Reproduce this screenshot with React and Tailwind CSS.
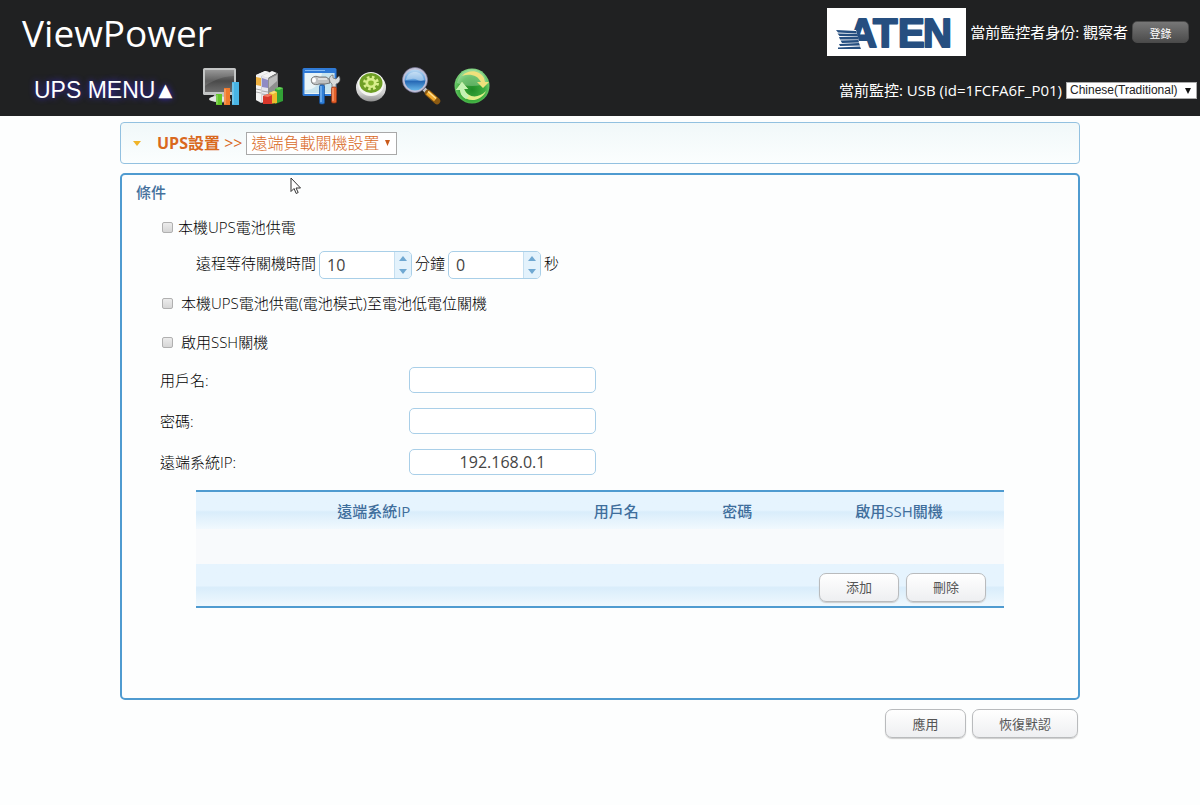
import React, { useState } from "react";

const MonitorIcon = () => (
  <svg viewBox="0 0 40 40" className="size-10" aria-hidden="true">
    <defs>
      <linearGradient id="screen" x1="0" y1="0" x2="0" y2="1">
        <stop offset="0" stopColor="#8a8a8a" />
        <stop offset="0.5" stopColor="#4a4a4a" />
        <stop offset="1" stopColor="#6d6d6d" />
      </linearGradient>
    </defs>
    <path d="M14 28h14l2 7c-6 2-14 2-20-1z" fill="#b9bbbc" />
    <ellipse cx="17" cy="33" rx="9" ry="3" fill="#e4e6e6" />
    <rect x="2" y="2" width="33" height="27" rx="1.5" fill="#c3c5c5" />
    <rect x="4" y="4" width="29" height="22" fill="url(#screen)" />
    <path d="M4 4h29v6C24 10 12 14 4 20z" fill="#fff" opacity="0.12" />
    <rect x="15" y="28" width="6" height="11" fill="#62c52a" />
    <rect x="23" y="22" width="6" height="17" fill="#f07a2c" />
    <rect x="31" y="16" width="7" height="23" fill="#48b4e4" />
    <path d="M16 29v9M24 23v15M32 17v21" stroke="#fff" strokeOpacity="0.4" />
  </svg>
);

const BooksIcon = () => (
  <svg viewBox="0 0 40 40" className="size-10" aria-hidden="true">
    <path d="M5 9l9-4 4 1v29l-8 2-5-3z" fill="#d2d2d2" />
    <path d="M5 9l9-4 4 1-8 4zM11 10l10-5 5 2-9 5z" fill="#f4f4f4" />
    <path d="M17 12l10-5v25l-10 5z" fill="#8f8f8f" />
    <path d="M18 13l8-4v6l-8 7z" fill="#bdbdbd" />
    <path d="M5 9l5 1v26l-5-2z" fill="#f3f3f3" />
    <path d="M11 10l6 2v25l-6-1z" fill="#e6e6ee" />
    <path d="M5 11l5 1v8l-5-1z" fill="#eeb040" />
    <path d="M11 12l6 2v8l-6-1z" fill="#8f8bc4" />
    <path d="M5 23l5 1M5 26l5 1M11 25l6 1M11 28l6 1" stroke="#aaa" />
    <path d="M24 23l4-2 4 1v13l-8 3z" fill="#32a236" />
    <path d="M24 23l4-2 4 1-4 2z" fill="#6bd35a" />
    <path d="M18 27l5-2 3 1v11l-8 1z" fill="#edb92c" />
    <path d="M18 27l5-2 3 1-4 2z" fill="#fbe079" />
    <path d="M12 30l5-2 4 1v9l-9 0z" fill="#d8372b" />
    <path d="M12 30l5-2 4 1-4 2z" fill="#f37a62" />
  </svg>
);

const ToolsIcon = () => (
  <svg viewBox="0 0 40 40" className="size-10" aria-hidden="true">
    <rect x="1.5" y="2" width="34" height="28" rx="1.5" fill="#2f7ad6" />
    <rect x="3.5" y="7" width="30" height="21" fill="#e9f4f6" />
    <path d="M4 24c10 0 15-6 17-17h12v20H4z" fill="#c8e4ee" />
    <path d="M4 4.500h20" stroke="#83baf3" />
    <rect x="19" y="14" width="5" height="8" fill="#a8a8a8" />
    <path
      d="M11 12c2-2 5-2 7-1h7l3 2 1 4-5 1h-6c-2 1-5 1-7-1-1-2-1-4 0-5z"
      fill="#bfc1c1"
      stroke="#555"
      strokeWidth="0.700"
    />
    <ellipse cx="13" cy="14" rx="2" ry="2.500" fill="#fff" />
    <path d="M17 13h9" stroke="#fff" />
    <rect x="18.500" y="19" width="5" height="19" rx="1.500" fill="#2f7fd8" stroke="#154f96" strokeWidth="0.700" />
    <path d="M20 20v16" stroke="#9fd0fa" />
    <path d="M31 22h4v-4c4-1 5-5 3-8l-3 3-3-1v-3c-4 0-5 6-1 9z" fill="#d8dada" stroke="#666" strokeWidth="0.700" />
    <rect x="30.500" y="21" width="5" height="16" rx="1.500" fill="#e4612a" stroke="#9a3211" strokeWidth="0.700" />
    <path d="M32 22v13" stroke="#ffb48c" />
  </svg>
);

const GearIcon = () => (
  <svg viewBox="0 0 40 40" className="size-10" aria-hidden="true">
    <defs>
      <linearGradient id="dial" x1="0" y1="0" x2="0" y2="1">
        <stop offset="0" stopColor="#f4f4f4" />
        <stop offset="0.700" stopColor="#d0d0d0" />
        <stop offset="1" stopColor="#8f8f8f" />
      </linearGradient>
    </defs>
    <ellipse cx="20" cy="21.500" rx="15" ry="14" fill="url(#dial)" />
    <ellipse cx="20" cy="18" rx="13" ry="12" fill="#f6f6f2" />
    <ellipse cx="20" cy="17" rx="11.500" ry="10" fill="#6f9f26" />
    <ellipse cx="20" cy="17" rx="5.500" ry="5" fill="#d8ee8c" />
    <ellipse cx="20" cy="17" rx="6.500" ry="5.800" fill="none" stroke="#d8ee8c" strokeWidth="3" strokeDasharray="2.500 2.350" />
    <ellipse cx="20" cy="17" rx="2.800" ry="2.400" fill="#86b52f" />
  </svg>
);

const SearchIcon = () => (
  <svg viewBox="0 0 40 40" className="size-10" aria-hidden="true">
    <defs>
      <linearGradient id="lens" x1="0" y1="0" x2="0" y2="1">
        <stop offset="0" stopColor="#c4dff5" />
        <stop offset="0.500" stopColor="#5d9edc" />
        <stop offset="0.550" stopColor="#2567b4" />
        <stop offset="1" stopColor="#6fc0ee" />
      </linearGradient>
    </defs>
    <path d="M23 23l5 5" stroke="#c4c4c8" strokeWidth="4" />
    <path d="M27 27l9 8" stroke="#8c5a12" strokeWidth="6.500" strokeLinecap="round" />
    <path d="M26.500 26.500l8 7" stroke="#f2a92b" strokeWidth="4.500" />
    <path d="M27 25.500l8 7" stroke="#fde29a" strokeWidth="1.200" />
    <circle cx="14" cy="14" r="11.500" fill="url(#lens)" stroke="#c0c0d6" strokeWidth="2" />
    <circle cx="14" cy="14" r="12.600" fill="none" stroke="#77779a" strokeWidth="0.600" />
    <path d="M5 14c1-6 5-8 9-8s8 2 9 8c-6 3-7-2-12-1-3 0-4 1-6 1z" fill="#fff" opacity="0.350" />
  </svg>
);

const RefreshIcon = () => (
  <svg viewBox="0 0 40 40" className="size-10" aria-hidden="true">
    <defs>
      <radialGradient id="globe" cx="0.500" cy="0.600" r="0.600">
        <stop offset="0" stopColor="#1f8a26" />
        <stop offset="0.600" stopColor="#3fae40" />
        <stop offset="1" stopColor="#86d884" />
      </radialGradient>
    </defs>
    <circle cx="21" cy="20" r="17.500" fill="url(#globe)" />
    <path d="M6 17C8 7 15 3.500 21 3.500S34 7 36 17c-8 4-22 4-30 0z" fill="#fff" opacity="0.250" />
    <path d="M11 10c6-7 18-6 22 2l1 4h4l-6 6-6-6h4c-3-7-12-9-19-6z" fill="#efe07c" />
    <path d="M35 25c-5 11-19 12-25 3l-1-4H5l6-8 6 7h-4c4 9 14 10 22 2z" fill="#e2ee8a" />
    <path d="M10 28l-1-4H5l6-8 6 7h-4c1 3 3 5 5 7l-3 3c-2-1-4-3-5-5z" fill="#c4f2b4" />
  </svg>
);

const AtenLogo = () => (
  <svg viewBox="0 0 139 48" className="h-12 w-[139px] bg-white" role="img" aria-label="ATEN">
    <text
      x="21 46 71 96"
      y="39"
      fontFamily="Liberation Sans, sans-serif"
      fontWeight="700"
      fontSize="40"
      fill="#264f80"
      stroke="#264f80"
      strokeWidth="2"
      strokeLinejoin="round"
    >
      ATEN
    </text>
    <path d="M8 22h21l6 22H8z" fill="#fff" />
    <path
      d="M9 22l20 1 1 2.500-19-1zM10.500 25.500l20 .500 1 2.500-19-.500zM12 29h19l1 2.500H13zM13.500 32.500l18-.500.500 2.500-17 .500zM12 36l20-1 1 2.500-20 .500zM11 39.500l22-1 1 2.500H11z"
      fill="#264f80"
    />
  </svg>
);

const menuItems = [
  { label: "監控", Icon: MonitorIcon },
  { label: "日誌", Icon: BooksIcon },
  { label: "工具", Icon: ToolsIcon },
  { label: "設置", Icon: GearIcon },
  { label: "搜索", Icon: SearchIcon },
  { label: "刷新", Icon: RefreshIcon },
];

const Header = () => (
  <header className="bg-[#202122] text-white">
    <div className="flex items-center justify-between pt-2 pr-[11px] pl-[22px]">
      <h1 className="pt-[2px] text-[37px] leading-[46px]">ViewPower</h1>
      <div className="flex items-center gap-1">
        <AtenLogo />
        <span className="text-[15px]">當前監控者身份: 觀察者</span>
        <button
          type="button"
          className="h-[22px] w-[57px] rounded-[5px] border border-[#4a4a4a] bg-linear-to-b from-[#777] to-[#4c4c4c] text-[11px]"
        >
          登錄
        </button>
      </div>
    </div>
    <div className="flex items-end justify-between pt-[10px] pr-[3px] pb-[10px] pl-[34px]">
      <div className="flex items-end gap-[29px]">
        <button
          type="button"
          className="flex h-8 items-center font-['Liberation_Sans',sans-serif] text-[23px] text-shadow-[0_0_6px_#3a2ad0]"
        >
          UPS MENU
          <span className="ml-[3px] font-['DejaVu_Sans',sans-serif] text-[18px]">▲</span>
        </button>
        <nav className="flex gap-[10px]">
          {menuItems.map(({ label, Icon }) => (
            <button key={label} type="button" aria-label={label}>
              <Icon />
            </button>
          ))}
        </nav>
      </div>
      <div className="flex h-8 items-center gap-1">
        <span className="text-[15px]">當前監控: USB (id=1FCFA6F_P01)</span>
        <div className="relative flex">
          <select
            aria-label="語言"
            className="h-[17px] w-[131px] appearance-none border border-[#aaa] bg-white pl-[3px] font-['Liberation_Sans',sans-serif] text-[12px] leading-[15px] text-[#222]"
          >
            <option>Chinese(Traditional)</option>
          </select>
          <svg viewBox="0 0 6 6" className="pointer-events-none absolute top-[6px] right-[6px] size-[6px]" aria-hidden="true">
            <path d="M0 0h6L3 6z" fill="#111" />
          </svg>
        </div>
      </div>
    </div>
  </header>
);

const Breadcrumb = () => (
  <div className="flex h-[42px] items-center rounded-[4px] border border-[#93c1e0] bg-linear-to-b from-[#f1f8f9] to-[#fbfefe] pl-3 text-[16px] text-[#d9691e]">
    <svg viewBox="0 0 8 5" className="mr-4 h-[5px] w-2" aria-hidden="true">
      <path d="M0 0h8L4 5z" fill="#f0b429" />
    </svg>
    <span className="mr-1">
      <b>UPS設置</b> &gt;&gt;
    </span>
    <div className="relative flex">
      <select
        aria-label="設置頁面"
        className="h-[23px] w-[151px] appearance-none border border-[#a9a9a9] bg-white pl-1 leading-[21px] font-light"
      >
        <option>遠端負載關機設置</option>
      </select>
      <svg viewBox="0 0 5 6" className="pointer-events-none absolute top-2 right-[7px] h-[6px] w-[5px]" aria-hidden="true">
        <path d="M0 0h5L2.500 6z" fill="#c9591a" />
      </svg>
    </div>
  </div>
);

const CheckRow = ({ label, className }) => (
  <label className={`flex h-6 items-center pl-10 ${className}`}>
    <input
      type="checkbox"
      className="size-[11px] appearance-none rounded-[2px] border border-[#b0b0b0] bg-linear-to-b from-[#ececec] to-[#d6d6d6] checked:bg-[#4a95cc]"
    />
    {label}
  </label>
);

const Spinner = ({ label, initial }) => {
  const [value, setValue] = useState(initial);

  return (
    <div className="flex h-7 w-[93px] overflow-hidden rounded-[5px] border border-[#a9cfe8] bg-white">
      <input
        type="number"
        aria-label={label}
        value={value}
        onChange={(e) => setValue(Number(e.target.value))}
        className="w-0 flex-1 appearance-none pl-[7px] text-[16px] font-normal text-[#444] outline-none [-moz-appearance:textfield] [&::-webkit-inner-spin-button]:appearance-none"
      />
      <div className="flex w-[17px] flex-col border-l border-[#c5dff0] bg-[#e3f2fc]">
        <button type="button" aria-label={`${label} +`} onClick={() => setValue(value + 1)} className="flex flex-1 items-center justify-center">
          <svg viewBox="0 0 8 5" className="h-[5px] w-2">
            <path d="M0 5h8L4 0z" fill="#6fa8d2" />
          </svg>
        </button>
        <button type="button" aria-label={`${label} -`} onClick={() => setValue(Math.max(0, value - 1))} className="flex flex-1 items-center justify-center">
          <svg viewBox="0 0 8 5" className="h-[5px] w-2">
            <path d="M0 0h8L4 5z" fill="#6fa8d2" />
          </svg>
        </button>
      </div>
    </div>
  );
};

const Field = ({ id, label, type = "text", value }) => (
  <div className="grid grid-cols-[249px_187px] items-center">
    <label htmlFor={id}>{label}</label>
    <input
      id={id}
      type={type}
      defaultValue={value}
      className="h-[26px] rounded-[5px] border border-[#a9cfe8] bg-white text-center text-[16px] font-normal text-[#444]"
    />
  </div>
);

const LightButton = ({ children, className }) => (
  <button
    type="button"
    className={`h-[29px] rounded-[7px] border border-[#b9bbbd] bg-linear-to-b from-white to-[#eeeff1] text-[13px] font-normal text-[#555] shadow-[0_1px_1px_#ccc] ${className}`}
  >
    {children}
  </button>
);

const RemoteTable = () => (
  <table className="w-full table-fixed border-y-2 border-[#4f9bd0]">
    <thead className="bg-linear-to-b from-[#e6f4fe] from-50% via-[#d9edfb] via-55% to-[#f1f9fe] text-[#3f6e9c]">
      <tr className="h-[38px]">
        <th className="w-[44%] font-medium">遠端系統IP</th>
        <th className="w-[16%] font-medium">用戶名</th>
        <th className="w-[14%] font-medium">密碼</th>
        <th className="w-[26%] font-medium">啟用SSH關機</th>
      </tr>
    </thead>
    <tbody>
      <tr className="h-[35px] bg-[#f8fafc]">
        <td colSpan={4}></td>
      </tr>
    </tbody>
    <tfoot className="bg-linear-to-b from-[#e6f4fe] from-50% via-[#d9edfb] via-55% to-[#f1f9fe]">
      <tr className="h-[43px]">
        <td colSpan={4}>
          <div className="flex justify-end gap-[7px] pt-1 pr-[18px]">
            <LightButton className="w-20">添加</LightButton>
            <LightButton className="w-20">刪除</LightButton>
          </div>
        </td>
      </tr>
    </tfoot>
  </table>
);

const Cursor = () => (
  <svg viewBox="0 0 12 18" className="pointer-events-none absolute top-[2px] left-[168px] h-[18px] w-3" aria-hidden="true">
    <path d="M1 1v13.500l3-3 2.200 5 2-1-2.200-4.500h4.500z" fill="#fff" stroke="#333" />
  </svg>
);

const ConditionPanel = () => (
  <section className="relative mt-[9px] rounded-[5px] border-2 border-[#4f9bd0] pt-[5px] pb-[90px] font-light text-black">
    <Cursor />
    <h2 className="pl-[14px] text-[15px] leading-6 font-medium text-[#44709c]">條件</h2>
    <CheckRow label="本機UPS電池供電" className="mt-[11px] gap-[5px]" />
    <div className="mt-3 flex items-start gap-[3px] pl-[74px]">
      <span>遠程等待關機時間</span>
      <Spinner label="分鐘" initial={10} />
      <span>分鐘</span>
      <Spinner label="秒" initial={0} />
      <span>秒</span>
    </div>
    <CheckRow label="本機UPS電池供電(電池模式)至電池低電位關機" className="mt-3 gap-2" />
    <CheckRow label="啟用SSH關機" className="mt-[15px] gap-2" />
    <div className="mt-[13px] flex flex-col gap-[15px] pl-[38px]">
      <Field id="user" label="用戶名:" />
      <Field id="password" label="密碼:" type="password" />
      <Field id="ip" label="遠端系統IP:" value="192.168.0.1" />
    </div>
    <div className="mt-[15px] px-[74px]">
      <RemoteTable />
    </div>
  </section>
);

export default function App() {
  return (
    <div className="min-h-screen bg-[#fdfefe] font-['Open_Sans','Noto_Sans_CJK_TC',sans-serif] text-[15px] leading-6 text-[#222]">
      <Header />
      <main className="mx-auto w-4/5 pt-[6px]">
        <Breadcrumb />
        <ConditionPanel />
        <div className="mt-[9px] flex justify-end gap-[6px] pr-[2px]">
          <LightButton className="w-[81px]">應用</LightButton>
          <LightButton className="w-[106px]">恢復默認</LightButton>
        </div>
      </main>
    </div>
  );
}
